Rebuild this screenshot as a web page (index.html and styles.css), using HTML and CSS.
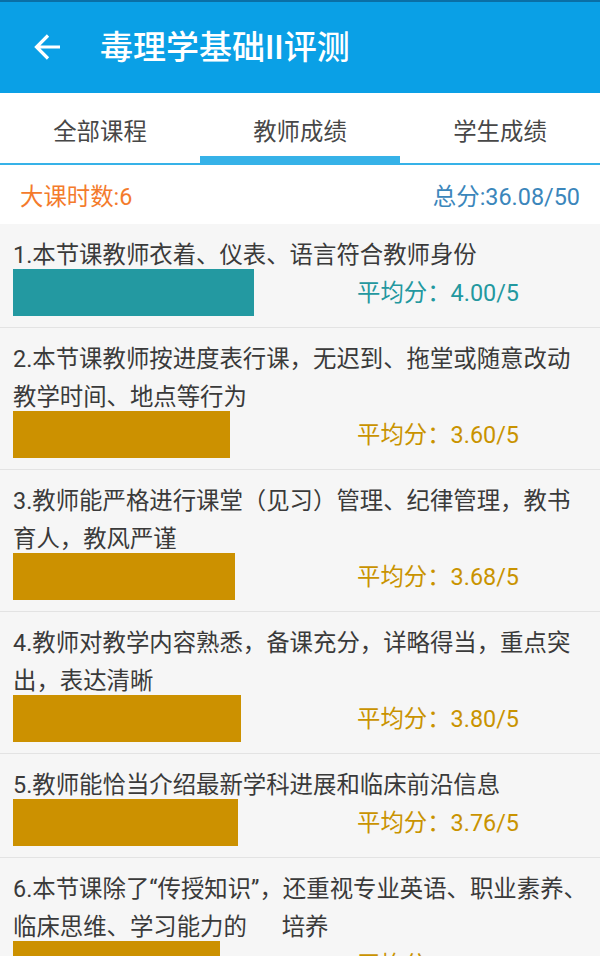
FILE: index.html
```html
<!DOCTYPE html>
<html lang="zh-CN">
<head>
<meta charset="utf-8">
<title>毒理学基础II评测</title>
<link rel="stylesheet" href="styles.css">
</head>
<body>
<div class="screen">
  <header class="appbar">
    <svg class="back" width="28" height="28" viewBox="0 0 28 28" aria-hidden="true">
      <path d="M27 14H3.5M15 2.5L3.5 14L15 25.5" fill="none" stroke="#ffffff" stroke-width="3.2"/>
    </svg>
    <h1 class="title">毒理学基础II评测</h1>
  </header>

  <nav class="tabs">
    <div class="tab">全部课程</div>
    <div class="tab active">教师成绩</div>
    <div class="tab">学生成绩</div>
  </nav>

  <div class="summary">
    <span class="hours">大课时数:6</span>
    <span class="total">总分:36.08/50</span>
  </div>

  <div class="list">
    <div class="item">
      <p class="q">1.本节课教师衣着、仪表、语言符合教师身份</p>
      <div class="row">
        <div class="bar-slot"><div class="bar teal" style="width:241px"></div></div>
        <span class="score teal-text">平均分：4.00/5</span>
      </div>
    </div>
    <div class="item">
      <p class="q">2.本节课教师按进度表行课，无迟到、拖堂或随意改动教学时间、地点等行为</p>
      <div class="row">
        <div class="bar-slot"><div class="bar gold" style="width:217px"></div></div>
        <span class="score gold-text">平均分：3.60/5</span>
      </div>
    </div>
    <div class="item">
      <p class="q">3.教师能严格进行课堂（见习）管理、纪律管理，教书育人，教风严谨</p>
      <div class="row">
        <div class="bar-slot"><div class="bar gold" style="width:222px"></div></div>
        <span class="score gold-text">平均分：3.68/5</span>
      </div>
    </div>
    <div class="item">
      <p class="q">4.教师对教学内容熟悉，备课充分，详略得当，重点突出，表达清晰</p>
      <div class="row">
        <div class="bar-slot"><div class="bar gold" style="width:228px"></div></div>
        <span class="score gold-text">平均分：3.80/5</span>
      </div>
    </div>
    <div class="item">
      <p class="q">5.教师能恰当介绍最新学科进展和临床前沿信息</p>
      <div class="row">
        <div class="bar-slot"><div class="bar gold" style="width:225px"></div></div>
        <span class="score gold-text">平均分：3.76/5</span>
      </div>
    </div>
    <div class="item">
      <p class="q">6.本节课除了“传授知识”，还重视专业英语、职业素养、临床思维、学习能力的&nbsp;&nbsp;&nbsp;&nbsp;&nbsp;&nbsp;培养</p>
      <div class="row">
        <div class="bar-slot"><div class="bar gold" style="width:207px"></div></div>
        <span class="score gold-text">平均分：3.44/5</span>
      </div>
    </div>
  </div>
</div>
</body>
</html>
```

FILE: styles.css
```css
html, body {
  margin: 0;
  padding: 0;
}

body {
  width: 600px;
  height: 956px;
  overflow: hidden;
  background: #f6f6f6;
  font-family: Roboto, "Noto Sans CJK SC", "Noto Sans", sans-serif;
  font-size: 23.4px;
  color: #3a3a3a;
}

.screen {
  width: 600px;
  height: 956px;
  overflow: hidden;
  display: flex;
  flex-direction: column;
}

.appbar {
  flex: 0 0 auto;
  box-sizing: border-box;
  height: 93px;
  border-top: 2px solid #0a6fa6;
  background: #0aa0e6;
  display: flex;
  align-items: center;
  padding-left: 33px;
  padding-bottom: 1px;
}

.back {
  display: block;
  flex: 0 0 auto;
}

.title {
  margin: 0 0 0 39px;
  font-size: 33px;
  font-weight: 500;
  color: #ffffff;
  line-height: 1;
  letter-spacing: 0;
}

.tabs {
  flex: 0 0 auto;
  box-sizing: border-box;
  height: 72px;
  background: #ffffff;
  border-bottom: 2px solid #36b2e8;
  display: flex;
}

.tab {
  position: relative;
  flex: 1 1 0;
  display: flex;
  align-items: center;
  justify-content: center;
  padding-top: 4px;
  color: #474747;
}

.tab.active::after {
  content: "";
  position: absolute;
  left: 0;
  right: 0;
  bottom: -2px;
  height: 9px;
  background: #36b2e8;
}

.summary {
  flex: 0 0 auto;
  height: 59px;
  box-sizing: border-box;
  background: #ffffff;
  display: flex;
  align-items: center;
  justify-content: space-between;
  padding: 0 20px;
}

.hours {
  color: #f47b2c;
}

.total {
  color: #3b86bb;
}

.list {
  flex: 1 1 auto;
  background: #f6f6f6;
}

.item {
  padding: 12px 13px 11px 13px;
  border-bottom: 1px solid #e3e3e3;
}

.q {
  margin: 0;
  line-height: 38px;
  color: #3a3a3a;
}

.row {
  margin-top: -5px;
  height: 47px;
  display: flex;
  align-items: center;
}

.bar-slot {
  flex: 0 0 344px;
  height: 47px;
}

.bar {
  height: 47px;
}

.bar.teal {
  background: #2399a1;
}

.bar.gold {
  background: #cc9100;
}

.score {
  line-height: 1;
  padding-top: 2px;
}

.teal-text {
  color: #23989f;
}

.gold-text {
  color: #c99300;
}
```
